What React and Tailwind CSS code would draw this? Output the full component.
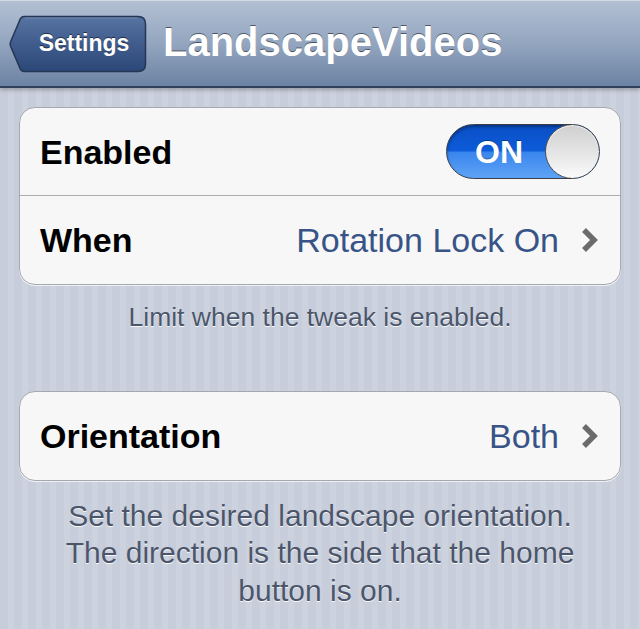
import React from 'react';

// Grey chevron used on disclosure rows
const Chevron = () => (
  <svg width="17" height="26" viewBox="0 0 17 26" className="shrink-0">
    <path d="M3 3 L13 13 L3 23" fill="none" stroke="#6b6b6b" strokeWidth="5.5" strokeLinejoin="miter" />
  </svg>
);

const BackButton = ({ label }) => (
  <div className="relative w-[138px] h-[58px] flex items-center justify-center shrink-0">
    <svg width="138" height="58" viewBox="0 0 138 58" className="absolute inset-0">
      <defs>
        <linearGradient id="backFill" x1="0" y1="0" x2="0" y2="1">
          <stop offset="0" stopColor="#5874a3" />
          <stop offset="0.5" stopColor="#3f5c8c" />
          <stop offset="1" stopColor="#2b4879" />
        </linearGradient>
      </defs>
      <path
        d="M15 1.5 H129 Q136.5 1.5 136.5 9 V49 Q136.5 56.5 129 56.5 H15 Q13 56.5 11.5 54.5 L1.5 31 Q0.8 29 1.5 27 L11.5 3.5 Q13 1.5 15 1.5 Z"
        fill="url(#backFill)"
        stroke="#263753"
        strokeWidth="1.5"
      />
      <path d="M16 3 H128" stroke="rgba(255,255,255,0.18)" strokeWidth="1" />
    </svg>
    <span className="relative pl-[12px] text-[23px] leading-none font-bold text-white [text-shadow:0_-1px_0_rgba(0,0,0,0.55)]">
      {label}
    </span>
  </div>
);

const Toggle = () => (
  <div className="relative w-[154px] h-[55px] rounded-full overflow-hidden border border-[#3a3f4a] bg-[linear-gradient(180deg,#0a4fc6_0%,#0d5bd9_48%,#3a86ee_52%,#5ea3f5_100%)] shadow-[inset_0_2px_3px_rgba(0,0,0,0.35)] flex items-center">
    <span className="w-[104px] text-center text-[32px] font-bold text-white leading-none [text-shadow:0_-1px_0_rgba(0,0,0,0.35)]">
      ON
    </span>
    <div className="absolute right-[-1px] top-[-1px] w-[55px] h-[55px] rounded-full border border-[#4f4f4f] bg-[linear-gradient(180deg,#cfcfcf_0%,#e6e6e6_55%,#fbfbfb_100%)] shadow-[inset_0_1px_1px_rgba(255,255,255,0.8)]" />
  </div>
);

const Row = ({ label, children, last }) => (
  <div
    className={`h-[88px] flex items-center justify-between pl-[20px] pr-[20px] ${
      last ? '' : 'border-b border-[#abadb2]'
    }`}
  >
    <span className="text-[34px] font-bold text-black leading-none">{label}</span>
    {children}
  </div>
);

const Value = ({ text }) => (
  <div className="flex items-center gap-[22px] pr-[2px]">
    <span className="text-[34px] text-[#385487] leading-none">{text}</span>
    <Chevron />
  </div>
);

const Group = ({ children }) => (
  <div className="mx-[19px] rounded-[16px] border border-[#a5a8ae] bg-[#f7f7f7] shadow-[0_1px_0_rgba(255,255,255,0.7)] overflow-hidden">
    {children}
  </div>
);

const Footer = ({ children, small }) => (
  <p
    className={`px-[40px] text-center leading-[37.5px] text-[#4c566b] [text-shadow:0_1px_0_rgba(255,255,255,0.9)] ${
      small ? 'text-[26.5px]' : 'text-[30px]'
    }`}
  >
    {children}
  </p>
);

export default function App() {
  return (
    <div className="w-[640px] h-[629px] overflow-hidden font-['Liberation_Sans',Arial,sans-serif] bg-[repeating-linear-gradient(90deg,#c7cdda_0px,#c7cdda_8px,#ccd2de_8px,#ccd2de_14px)]">
      {/* Navigation bar */}
      <header className="relative z-10 h-[88px] flex items-center pl-[9px] gap-[16px] border-t border-[#d3dae5] border-b-2 border-b-[#2f405d] bg-[linear-gradient(180deg,#b3c0d3_0%,#93a5bf_50%,#6c83a3_100%)] shadow-[0_2px_4px_rgba(0,0,0,0.25)]">
        <BackButton label="Settings" />
        <h1 className="pb-[4px] text-[40px] font-bold text-white leading-none [text-shadow:0_-1px_0_rgba(0,0,0,0.5)]">
          LandscapeVideos
        </h1>
      </header>

      <main className="pt-[19px]">
        <Group>
          <Row label="Enabled">
            <Toggle />
          </Row>
          <Row label="When" last>
            <Value text="Rotation Lock On" />
          </Row>
        </Group>
        <div className="pt-[14px] pb-[54px]">
          <Footer small>Limit when the tweak is enabled.</Footer>
        </div>

        <Group>
          <Row label="Orientation" last>
            <Value text="Both" />
          </Row>
        </Group>
        <div className="pt-[16px]">
          <Footer>
            Set the desired landscape orientation.
            <br />
            The direction is the side that the home
            <br />
            button is on.
          </Footer>
        </div>
      </main>
    </div>
  );
}
